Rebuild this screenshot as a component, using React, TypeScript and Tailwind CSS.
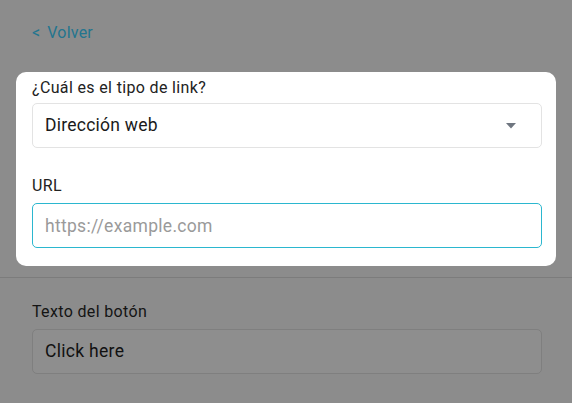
export default function App() {
  return (
    <div className="min-h-[403px] w-full bg-[#8c8c8c] font-['Roboto',sans-serif]">
      <div className="px-8 pt-[21px] h-[72px]">
        <a className="text-[16px] leading-[22px] tracking-[0.2px] text-[#23758f]">
          <span className="mr-[7px]">&lt;</span>Volver
        </a>
      </div>

      <div className="mx-4 rounded-[10px] bg-white pl-4 pr-[14px] pt-[5px] pb-[18px]">
        <label className="block text-[16px] leading-[22px] tracking-[0.35px] text-[#222]">¿Cuál es el tipo de link?</label>
        <div className="mt-[4px] flex h-[45px] items-center justify-between rounded-[5px] border border-[#e3e3e3] pl-3 pr-[25px]">
          <span className="text-[17.5px] tracking-[0.25px] text-[#1a1a1a]">Dirección web</span>
          <svg width="10" height="6" viewBox="0 0 10 6">
            <path d="M0 0h10L5 5.5z" fill="#6f7680" />
          </svg>
        </div>

        <label className="mt-[27px] block text-[16px] leading-[22px] tracking-[0.35px] text-[#222]">URL</label>
        <input
          className="mt-[6px] block h-[45px] w-full rounded-[5px] border border-[#2bb7cf] px-3 text-[17.5px] tracking-[0.3px] text-[#222] placeholder:text-[#9a9a9a] outline-none"
          placeholder="https://example.com"
        />
      </div>

      <div className="mt-[11px] border-t border-[#7c7c7c]" />

      <div className="pl-8 pr-[30px] pt-[23px]">
        <label className="block text-[16px] leading-[22px] tracking-[0.35px] text-[#141414]">Texto del botón</label>
        <div className="mt-[6px] flex h-[45px] items-center rounded-[5px] border border-[#7f7f7f] bg-[#8e8e8e] px-3">
          <span className="text-[17.5px] tracking-[0.3px] text-[#111]">Click here</span>
        </div>
      </div>
    </div>
  );
}
